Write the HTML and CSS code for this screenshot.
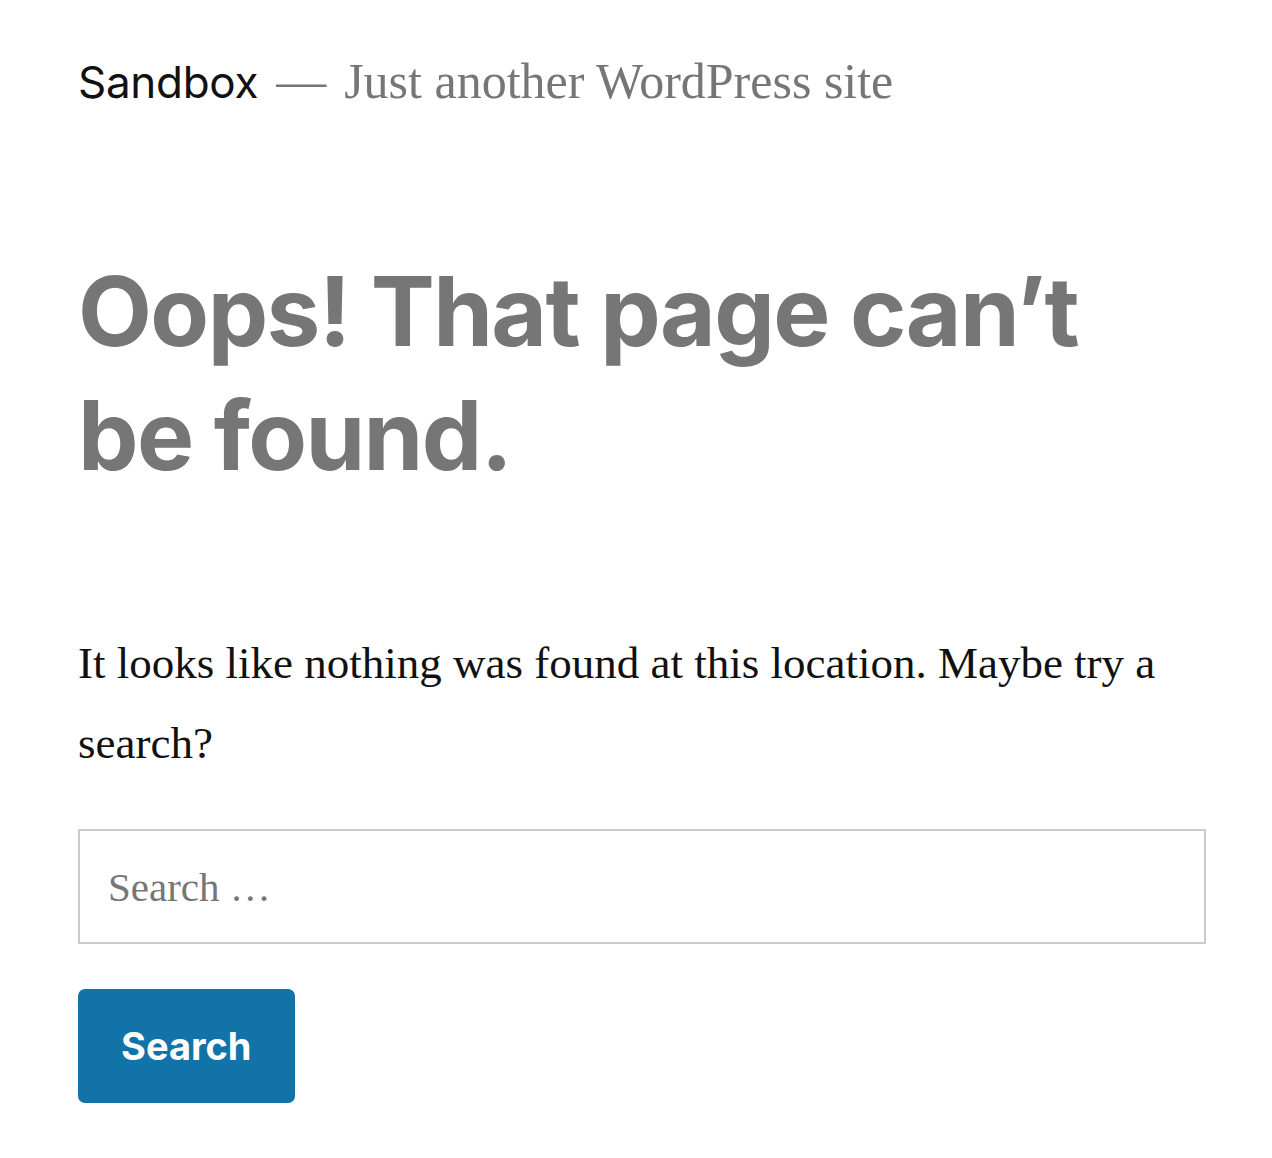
FILE: index.html
```html
<!DOCTYPE html>
<html lang="en">
<head>
<meta charset="utf-8">
<title>Page not found – Sandbox</title>
<link rel="stylesheet" href="styles.css">
</head>
<body>
<div class="page">
  <header class="site-header">
    <span class="site-title">Sandbox</span>
    <span class="sep">—</span>
    <span class="tagline">Just another WordPress site</span>
  </header>
  <main class="content">
    <h1 class="page-title">Oops! That page can’t be found.</h1>
    <p class="lead">It looks like nothing was found at this location. Maybe try a search?</p>
    <form class="search-form" onsubmit="return false">
      <input class="search-field" type="search" placeholder="Search …">
      <button class="search-submit" type="submit">Search</button>
    </form>
  </main>
</div>
</body>
</html>
```

FILE: styles.css
```css
html, body {
  margin: 0;
  padding: 0;
  background: #ffffff;
}

.page {
  padding: 52px 66px 40px 78px;
}

.site-header {
  display: flex;
  align-items: baseline;
  gap: 18px;
  white-space: nowrap;
}

.site-title {
  font-family: Inter, "Liberation Sans", sans-serif;
  font-size: 44px;
  letter-spacing: -0.3px;
  color: #111111;
  line-height: 1.2;
}

.sep {
  font-family: "Liberation Serif", serif;
  font-size: 50px;
  color: #767676;
}

.tagline {
  font-family: "Liberation Serif", serif;
  font-size: 50px;
  color: #767676;
}

.content {
  margin-top: 139px;
}

.page-title {
  font-family: Inter, "Liberation Sans", sans-serif;
  font-weight: 700;
  font-size: 96px;
  line-height: 124px;
  letter-spacing: -1.6px;
  color: #767676;
  margin: 0;
  max-width: 1050px;
}

.lead {
  font-family: "Liberation Serif", serif;
  font-size: 45px;
  line-height: 80px;
  color: #111111;
  margin: 126px 0 0 0;
}

.search-form {
  display: flex;
  flex-direction: column;
  align-items: flex-start;
  gap: 45px;
  margin-top: 46px;
}

.search-field {
  box-sizing: border-box;
  width: 1128px;
  height: 115px;
  border: 2px solid #cccccc;
  padding: 0 28px;
  font-family: "Liberation Serif", serif;
  font-size: 41px;
  color: #111;
  background: #fff;
  outline: none;
}

.search-field::placeholder {
  color: #767676;
}

.search-submit {
  box-sizing: border-box;
  height: 114px;
  padding: 0 43px;
  border: 0;
  border-radius: 7px;
  background: #1173a8;
  color: #ffffff;
  font-family: Inter, "Liberation Sans", sans-serif;
  font-weight: 700;
  font-size: 38px;
}
```
